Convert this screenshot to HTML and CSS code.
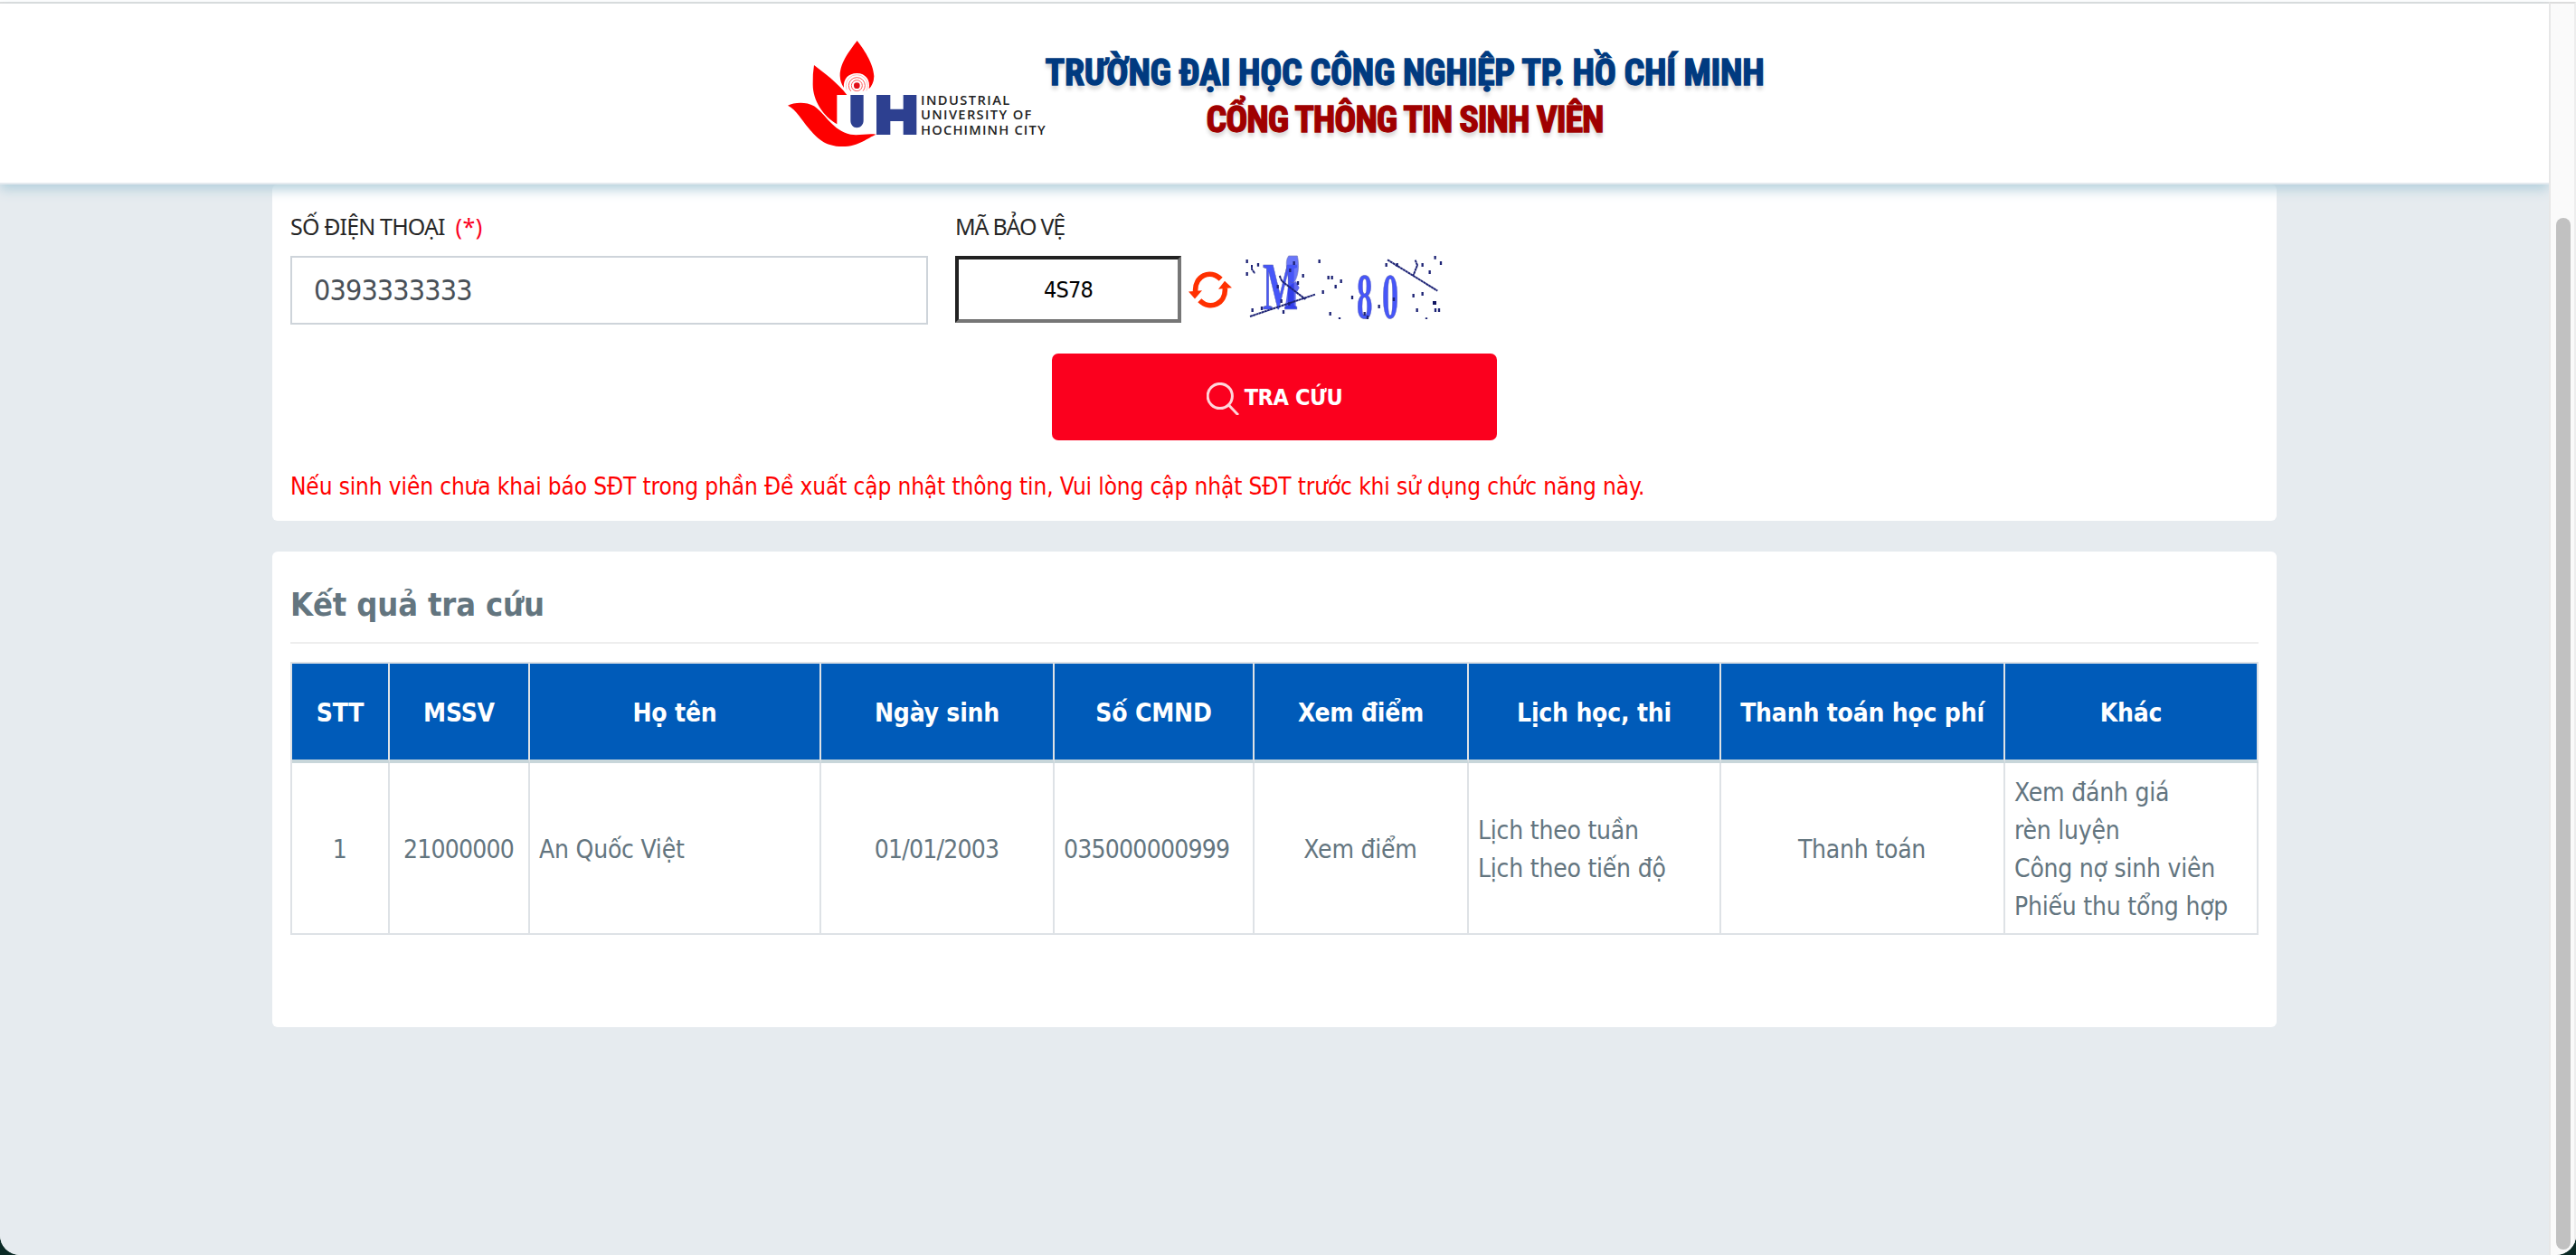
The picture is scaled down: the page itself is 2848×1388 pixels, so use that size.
FILE: index.html
```
<!DOCTYPE html>
<html lang="vi">
<head>
<meta charset="utf-8">
<title>Cổng thông tin sinh viên</title>
<link rel="stylesheet" href="styles.css">
</head>
<body>
<div class="window">
  <div class="page">
    <header class="header">
      <svg class="logo" viewBox="60 60 858 369" role="img" aria-label="IUH">
        <g fill="#fe0000">
          <path d="M293 75C273 102 236 145 236 192Q237 215 249 231C246 202 264 183 292 183C321 183 338 206 332 235Q348 220 349 193C347 148 312 100 293 75Z"/>
          <path d="M150 156C181 181 230 215 259 255H226V352C180 325 146 275 146 220Q145 185 150 156Z"/>
          <path d="M63 290C83 280 122 276 150 292C188 318 213 375 271 386C299 391 329 381 356 386C327 397 300 426 244 426C185 426 158 396 132 365C108 337 91 304 63 290Z"/>
        </g>
        <g fill="none" stroke="#f55" stroke-width="3">
          <circle cx="292" cy="224" r="36" stroke="#fbb" stroke-dasharray="150 80" stroke-dashoffset="-98"/>
          <circle cx="292" cy="224" r="27" stroke-dasharray="125 45" stroke-dashoffset="-64"/>
          <circle cx="292" cy="224" r="18"/>
        </g>
        <circle cx="292" cy="224" r="10" fill="#e10d16"/>
        <path fill="#2d4090" d="M271 255H314V340C314 354 304 364 292 364S271 354 271 340ZM357 255H403V302H446V255H490V387H446V342H403V387H357Z"/>
        <g class="logo-text">
          <text x="504" y="289" textLength="295">INDUSTRIAL</text>
          <text x="504" y="337" textLength="367">UNIVERSITY OF</text>
          <text x="504" y="386" textLength="413">HOCHIMINH CITY</text>
        </g>
      </svg>
      <div class="banner">
        <div class="banner-school">TRƯỜNG ĐẠI HỌC CÔNG NGHIỆP TP. HỒ CHÍ MINH</div>
        <div class="banner-portal">CỔNG THÔNG TIN SINH VIÊN</div>
      </div>
    </header>

    <main class="content">
      <section class="card search">
        <div class="fields">
          <div class="field">
            <label class="label" for="phone">SỐ ĐIỆN THOẠI <span class="required">(*)</span></label>
            <input class="phone" id="phone" type="text" value="0393333333">
          </div>
          <div class="field">
            <label class="label label-code" for="code">MÃ BẢO VỆ</label>
            <div class="code-row">
              <input class="code" id="code" type="text" value="4S78">
              <svg class="refresh" viewBox="42 76 144 122">
                <g fill="none" stroke="#ff3000" stroke-width="17">
                  <path d="M65 142C62 92 113 66 149 102"/>
                  <path d="M163 132C166 182 115 208 79 172"/>
                </g>
                <path fill="#ff3000" d="M42 143L87 139L63 167ZM186 130L141 135L162 108Z"/>
              </svg>
              <svg class="captcha" viewBox="228 24 660 210">
                <g class="captcha-glyphs">
                  <text transform="translate(288 202) scale(.56 1)" font-size="222">M</text>
                  <text transform="translate(600 232) scale(.48 1)" font-size="218">8</text>
                  <text transform="translate(684 232) scale(.5 1)" font-size="218">0</text>
                </g>
                <path fill="#4656f8" stroke="#5a5fa8" stroke-width="2" opacity=".8" d="M374 24H403C409 50 408 82 397 104C392 116 384 114 378 108C370 96 366 62 367 44Q368 32 374 24Z"/>
                <path fill="#2c38e8" opacity=".75" d="M372 128L398 108L410 130L398 150V198H362Z"/>
                <g fill="none" stroke="#1d2375" stroke-width="6">
                  <path d="M246 225L462 152M344 90L352 108L430 168M702 37L868 140M794 38L801 55L787 90M252 54V68L262 82" stroke-dasharray="9 1"/>
                </g>
                <path fill="none" stroke="#1d2375" stroke-width="7" d="M236 36v12M236 78v12M273 48v11M476 36v12M422 84v12M506 90v12M518 90v12M548 102v12M530 120v12M488 138v12M512 210v12M543 228v6M585 156v12M674 186v12M636 222v12M626 210v12M698 48v12M734 48v12M818 48v12M842 72v12M860 24v11M879 42v12M788 150v12M818 144v12M800 198v12M861 198v12M873 198v12M831 229v5M254 198v12M285 192v12M357 204v12M723 162v12M392 42v12M379 66v12M405 108v12M338 120v12M350 168v12M376 178v10"/>
                <path fill="#101560" d="M852 174h12v12h-12z"/>
              </svg>
            </div>
          </div>
        </div>
        <button class="submit" type="button">
          <svg class="submit-icon" viewBox="0 0 36 36">
            <g fill="none" stroke="#ffd5da" stroke-width="3"><circle cx="14.8" cy="15" r="13.6"/><path d="M24.5 25L35 36"/></g>
          </svg>
          <span>TRA CỨU</span>
        </button>
        <p class="note">Nếu sinh viên chưa khai báo SĐT trong phần Đề xuất cập nhật thông tin, Vui lòng cập nhật SĐT trước khi sử dụng chức năng này.</p>
      </section>

      <section class="card results">
        <h2 class="title">Kết quả tra cứu</h2>
        <table class="table">
          <colgroup>
            <col class="c-stt"><col class="c-id"><col class="c-name"><col class="c-birth"><col class="c-card"><col class="c-mark"><col class="c-plan"><col class="c-fee"><col class="c-other">
          </colgroup>
          <thead>
            <tr><th>STT</th><th>MSSV</th><th>Họ tên</th><th>Ngày sinh</th><th>Số CMND</th><th>Xem điểm</th><th>Lịch học, thi</th><th>Thanh toán học phí</th><th>Khác</th></tr>
          </thead>
          <tbody>
            <tr>
              <td class="center digits">1</td>
              <td class="center digits">21000000</td>
              <td>An Quốc Việt</td>
              <td class="center digits">01/01/2003</td>
              <td class="digits">035000000999</td>
              <td class="center">Xem điểm</td>
              <td>Lịch theo tuần<br>Lịch theo tiến độ</td>
              <td class="center">Thanh toán</td>
              <td>Xem đánh giá<br>rèn luyện<br>Công nợ sinh viên<br>Phiếu thu tổng hợp</td>
            </tr>
          </tbody>
        </table>
      </section>
    </main>
  </div>
  <div class="scrollbar"><div class="thumb"></div></div>
</div>
</body>
</html>
```
FILE: styles.css
```
* { box-sizing: border-box; }
html { height: 100%; background: #0a2925; }
body {
  margin: 0;
  height: 100%;
  overflow: hidden;
  font-family: "DejaVu Sans Condensed", "DejaVu Sans", sans-serif;
  font-stretch: condensed;
  color: #63757f;
}
.window {
  display: flex;
  height: 1388px;
  padding-top: 2px;
  border-radius: 0 0 22px 22px;
  overflow: hidden;
  background: #fff;
}
.page {
  flex: 1;
  border-top: 2px solid #dcdcdc;
  background: #e6ebef;
}
.header {
  position: relative;
  z-index: 1;
  display: flex;
  justify-content: center;
  height: 200px;
  padding-left: 2px;
  background: #fff;
  border-bottom: 2px solid #e4eaef;
  box-shadow: 0 6px 12px #b6d1dd;
}
.logo { width: 286px; height: 123px; margin-top: 36px; }
.logo-text {
  font: 600 44px "Open Sans", sans-serif;
  fill: #222;
}
.banner {
  width: 795px;
  padding-top: 51px;
  font: 700 40px/52px "Roboto Condensed", "Roboto", sans-serif;
  text-align: center;
  white-space: nowrap;
  text-shadow: 0 5px 4px rgba(0, 0, 0, .17);
}
.banner-school { color: #003a80; letter-spacing: -.32px; -webkit-text-stroke: 1.3px #003a80; }
.banner-portal { color: #a00000; letter-spacing: -1.05px; -webkit-text-stroke: 1.3px #a00000; }

.content { width: 2216px; margin: 0 auto; }
.card { padding: 0 20px; background: #fff; border-radius: 6px; }
.search { height: 372px; padding-top: 28px; }
.fields { display: flex; gap: 30px; }
.label {
  display: block;
  margin-bottom: 15px;
  font: 25px/36px "Noto Sans", sans-serif;
  letter-spacing: -.85px;
  color: #262626;
}
.label-code { letter-spacing: -1.2px; }
.required { margin-left: 6px; letter-spacing: .6px; color: #fb001e; }
.phone {
  display: block;
  width: 705px;
  height: 76px;
  padding: 0 24px;
  border: 2px solid #ced4da;
  background: #fff;
  font: 32px "DejaVu Sans Condensed", sans-serif;
  letter-spacing: -.85px;
  color: #495057;
}
.code-row { display: flex; align-items: flex-start; }
.code {
  width: 250px;
  height: 74px;
  border: 4px solid;
  border-color: #212121 #767676 #767676 #212121;
  border-radius: 0;
  font: 25px "DejaVu Sans Condensed", sans-serif;
  letter-spacing: -.8px;
  text-align: center;
  color: #000;
}
.refresh { width: 48px; height: 41px; margin: 17px 14px 0 8px; }
.captcha { width: 220px; height: 70px; overflow: visible; }
.captcha-glyphs {
  font-family: "Liberation Serif", serif;
  font-weight: 700;
  fill: #4656f8;
  stroke: #5a5fa8;
  stroke-width: 2;
}
.submit {
  display: flex;
  align-items: center;
  justify-content: center;
  gap: 6px;
  width: 492px;
  height: 96px;
  margin: 32px auto 31px;
  padding: 0;
  border: 0;
  border-radius: 7px;
  background: #fb001e;
  font: 700 25px "DejaVu Sans Condensed", sans-serif;
  letter-spacing: -.4px;
  color: #fff;
}
.submit-icon { width: 36px; height: 36px; margin-top: 4px; }
.note {
  margin: 0;
  font-size: 26px;
  line-height: 40px;
  letter-spacing: -.125px;
  color: #f00;
}
.results { height: 526px; margin-top: 34px; padding-top: 32px; }
.title {
  margin: 0 0 20px;
  padding-bottom: 14px;
  border-bottom: 2px solid #eee;
  font-size: 36px;
  line-height: 54px;
  letter-spacing: -.15px;
}
.table {
  width: 2176px;
  table-layout: fixed;
  border-collapse: separate;
  border-spacing: 0;
  border: solid #dee2e6;
  border-width: 2px 0 0 2px;
  font-size: 28px;
  line-height: 42px;
}
.c-stt { width: 108px; }
.c-id { width: 155px; }
.c-name { width: 322px; }
.c-birth { width: 258px; }
.c-card { width: 221px; }
.c-mark { width: 237px; }
.c-plan { width: 279px; }
.c-fee { width: 314px; }
.c-other { width: 280px; }
.table th {
  height: 110px;
  padding: 3px 0 0;
  border-right: 2px solid #dee2e6;
  border-bottom: 4px solid #c8d6da;
  background: #005bb9;
  color: #fff;
  letter-spacing: -.2px;
  white-space: nowrap;
}
.table td {
  height: 190px;
  padding: 12px 0 8px 10px;
  border-right: 2px solid #dee2e6;
  border-bottom: 2px solid #dee2e6;
  letter-spacing: -.22px;
  white-space: nowrap;
}
.table .center { padding: 4px 1px 0 0; text-align: center; }
.table .digits { letter-spacing: -.75px; }

.scrollbar {
  position: relative;
  z-index: 2;
  width: 30px;
  padding: 237px 4px 6px 6px;
  border-top: 2px solid #dcdcdc;
  border-left: 2px solid #e7e7e7;
  border-right: 2px solid #ededed;
  background: #fafafa;
}
.thumb { width: 16px; height: 1141px; border-radius: 8px; background: #c1c1c1; }
```
